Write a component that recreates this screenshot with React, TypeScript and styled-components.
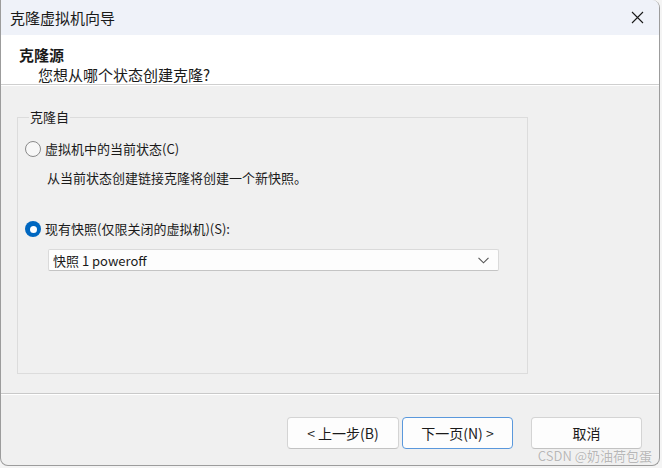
import styled, { createGlobalStyle } from "styled-components";

const GlobalStyle = createGlobalStyle`
    * { box-sizing: border-box; }
    body {
        margin: 0;
        background: #f4f4f4;
        font-family: "Noto Sans CJK SC", "Noto Sans", sans-serif;
        color: #1a1a1a;
    }
`

const Window = styled.div`
    position: relative;
    width: 660px;
    height: 466px;
    display: flex;
    flex-direction: column;
    border: 1px solid #9c9c9c;
    border-top: none;
    border-radius: 0 8px 8px 8px;
    overflow: hidden;
    background: #f0f0f0;
`
const TitleBar = styled.div`
    height: 35px;
    flex: none;
    display: flex;
    align-items: center;
    justify-content: space-between;
    padding-left: 9px;
    background: #eff2f9;
    font-size: 15px;
`
const CloseButton = styled.div`
    width: 44px;
    height: 35px;
    display: flex;
    align-items: center;
    justify-content: center;
`
const Header = styled.div`
    height: 50px;
    flex: none;
    background: #ffffff;
    border-bottom: 1px solid #cfcfcf;
    padding: 10px 0 0 18px;
    line-height: 20px;
    font-size: 15px;
`
const HeaderTitle = styled.div`
    font-weight: 700;
`
const HeaderSub = styled.div`
    margin-left: 19px;
`
const Body = styled.div`
    flex: 1;
    padding: 23px 0 0 16px;
    box-shadow: inset 0 1px #ffffff;
`
const GroupBox = styled.fieldset`
    width: 511px;
    height: 266px;
    margin: 0;
    padding: 0 0 0 7px;
    border: 1px solid #dcdcdc;
    font-size: 13px;
`
const Legend = styled.legend`
    margin-left: 4px;
    padding: 0 1px;
    line-height: 18px;
    font-size: 13px;
`
const RadioRow = styled.label<{ $top: number }>`
    display: flex;
    align-items: center;
    gap: 4px;
    height: 20px;
    margin-top: ${p => p.$top}px;
    line-height: 20px;
`
const RadioCircle = styled.span<{ $checked?: boolean }>`
    width: 16px;
    height: 16px;
    flex: none;
    border-radius: 50%;
    border: ${p => (p.$checked ? "none" : "1px solid #8a8a8a")};
    background: ${p => (p.$checked ? "#0067c0" : "#f7f7f7")};
    display: flex;
    align-items: center;
    justify-content: center;
    &::after {
        content: "";
        display: ${p => (p.$checked ? "block" : "none")};
        width: 7px;
        height: 7px;
        border-radius: 50%;
        background: #ffffff;
    }
`
const Hint = styled.div`
    margin: 9px 0 0 22px;
    line-height: 20px;
`
const Select = styled.div`
    width: 451px;
    height: 22px;
    margin: 10px 0 0 23px;
    padding: 0 9px 0 4px;
    display: flex;
    align-items: center;
    justify-content: space-between;
    background: #fdfdfd;
    border: 1px solid #dadada;
    border-bottom-color: #c4c4c4;
    border-radius: 2px;
    font-size: 13px;
`
const Footer = styled.div`
    height: 72px;
    flex: none;
    display: flex;
    justify-content: flex-end;
    align-items: flex-start;
    padding: 23px 17px 0 0;
    border-top: 1px solid #c9c9c9;
    box-shadow: inset 0 1px #ffffff;
`
const NavGroup = styled.div`
    display: flex;
    gap: 3px;
    margin-right: 18px;
`
const Button = styled.button<{ $focused?: boolean }>`
    height: 32px;
    width: ${p => (p.$focused ? 111 : 112)}px;
    padding: 0;
    font-family: inherit;
    font-size: 14px;
    color: #1a1a1a;
    background: #fdfdfd;
    border: 1px solid ${p => (p.$focused ? "#5a98dc" : "#d4d4d4")};
    border-bottom-color: ${p => (p.$focused ? "#5a98dc" : "#c2c2c2")};
    border-radius: 4px;
`
const CancelButton = styled(Button)`
    width: 111px;
`
const Watermark = styled.div`
    position: absolute;
    right: 7px;
    bottom: 2px;
    font-size: 13px;
    line-height: 14px;
    color: rgba(160, 160, 160, 0.75);
    text-shadow: 0 0 1px #ffffff;
    pointer-events: none;
`

export default function App() {
    return (
        <>
            <GlobalStyle />
            <Window>
                <TitleBar>
                    <span>克隆虚拟机向导</span>
                    <CloseButton>
                        <svg width="13" height="13" viewBox="0 0 13 13">
                            <path d="M1 1 L12 12 M12 1 L1 12" stroke="#1a1a1a" strokeWidth="1.1" />
                        </svg>
                    </CloseButton>
                </TitleBar>

                <Header>
                    <HeaderTitle>克隆源</HeaderTitle>
                    <HeaderSub>您想从哪个状态创建克隆?</HeaderSub>
                </Header>

                <Body>
                    <GroupBox>
                        <Legend>克隆自</Legend>
                        <RadioRow $top={13}>
                            <RadioCircle />
                            虚拟机中的当前状态(C)
                        </RadioRow>
                        <Hint>从当前状态创建链接克隆将创建一个新快照。</Hint>
                        <RadioRow $top={31}>
                            <RadioCircle $checked />
                            现有快照(仅限关闭的虚拟机)(S):
                        </RadioRow>
                        <Select>
                            <span>快照 1 poweroff</span>
                            <svg width="11" height="7" viewBox="0 0 11 7">
                                <path d="M0.5 0.8 L5.5 5.8 L10.5 0.8" fill="none" stroke="#555" strokeWidth="1.1" />
                            </svg>
                        </Select>
                    </GroupBox>
                </Body>

                <Footer>
                    <NavGroup>
                        <Button>&lt; 上一步(B)</Button>
                        <Button $focused>下一页(N) &gt;</Button>
                    </NavGroup>
                    <CancelButton>取消</CancelButton>
                </Footer>

                <Watermark>CSDN @奶油荷包蛋</Watermark>
            </Window>
        </>
    );
}
